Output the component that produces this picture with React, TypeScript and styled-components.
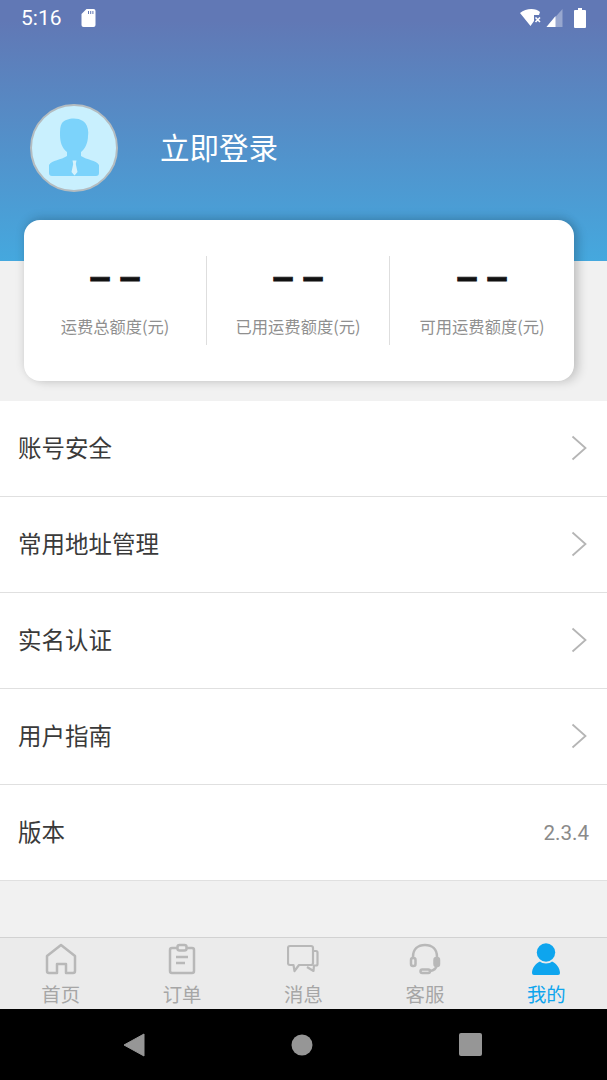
import styled, { createGlobalStyle } from "styled-components";

const GlobalStyle = createGlobalStyle`
  html, body {
    margin: 0;
    padding: 0;
    background: #f1f1f1;
  }
  body {
    font-family: "Noto Sans CJK SC", "Liberation Sans", sans-serif;
  }
`;

const Page = styled.div`
  width: 607px;
  height: 1080px;
  display: flex;
  flex-direction: column;
  overflow: hidden;
  background: #f1f1f1;
`;

const Header = styled.header`
  height: 261px;
  flex: none;
  display: flex;
  flex-direction: column;
  background: linear-gradient(180deg, #6178b5 0%, #6178b5 8%, #45a8de 100%);
`;

const StatusBar = styled.div`
  height: 36px;
  display: flex;
  align-items: center;
  padding: 0 21px;
  color: #fff;
  font-family: Roboto, "Liberation Sans", sans-serif;
  font-size: 21px;
`;

const Time = styled.span`
  margin-right: 19px;
`;

const StatusRight = styled.div`
  margin-left: auto;
  display: flex;
  align-items: center;
  gap: 4px;
`;

const Profile = styled.div`
  display: flex;
  align-items: center;
  padding: 68px 0 0 30px;
  gap: 42px;
`;

const Avatar = styled.div`
  width: 88px;
  height: 88px;
  flex: none;
  box-sizing: border-box;
  border-radius: 50%;
  border: 2px solid #b4bcc0;
  background: #c9f0fe;
  display: flex;
  align-items: center;
  justify-content: center;
  overflow: hidden;
`;

const LoginText = styled.div`
  color: #fff;
  font-size: 29.5px;
  line-height: 40px;
  margin-bottom: 5px;
`;

const Card = styled.section`
  flex: none;
  height: 161px;
  margin: -41px 33px 0 24px;
  border-radius: 16px;
  background: #fff;
  box-shadow: 6px 2px 10px rgba(0, 0, 0, 0.12), 0 -3px 10px rgba(0, 0, 0, 0.14);
  display: grid;
  grid-template-columns: 183px 183px 1fr;
  align-items: center;
`;

const Stat = styled.div<{ $divider?: boolean }>`
  height: 89px;
  display: flex;
  flex-direction: column;
  align-items: center;
  border-right: ${(p) => (p.$divider ? "1px solid #dedede" : "none")};
`;

const StatDash = styled.div`
  font-family: "Liberation Sans", sans-serif;
  font-weight: 700;
  font-size: 38px;
  line-height: 44px;
  word-spacing: -1.6px;
  color: #111;
  -webkit-text-stroke: 0.8px #111;
  margin-top: -1px;
`;

const StatLabel = styled.div`
  font-size: 16.3px;
  line-height: 22px;
  color: #8f8f8f;
  margin-top: 16px;
`;

const Menu = styled.nav`
  margin-top: 20px;
  background: #fff;
  flex: none;
`;

const Row = styled.div`
  height: 95px;
  border-bottom: 1px solid #e0e0e0;
  display: flex;
  align-items: center;
  justify-content: space-between;
  padding: 0 19px 0 18px;
`;

const RowLabel = styled.span`
  font-size: 23.5px;
  color: #3a3a3a;
  margin-bottom: 4px;
`;

const RowValue = styled.span`
  font-family: Roboto, "Liberation Sans", sans-serif;
  font-size: 20.6px;
  color: #8a8a8a;
  margin-right: -1px;
`;

const Chevron = styled.svg`
  margin: 0 1px 2px 0;
`;

const Spacer = styled.div`
  flex: 1;
`;

const TabBar = styled.footer`
  height: 72px;
  flex: none;
  box-sizing: border-box;
  background: #ebebeb;
  border-top: 1px solid #d2d2d2;
  display: grid;
  grid-template-columns: repeat(5, 1fr);
`;

const Tab = styled.div<{ $active?: boolean }>`
  display: flex;
  flex-direction: column;
  align-items: center;
  padding-top: 5px;
  color: ${(p) => (p.$active ? "#0ea5ee" : "#a6a6a6")};
`;

const TabLabel = styled.span`
  font-size: 19.4px;
  line-height: 24px;
  margin-top: 7px;
`;

const NavBar = styled.div`
  height: 71px;
  flex: none;
  background: #000;
  display: flex;
  align-items: center;
  justify-content: center;
  gap: 146px;
  padding-right: 2px;
`;

const BatteryIcon = styled.svg`
  margin-left: 7px;
`;

const MENU = ["账号安全", "常用地址管理", "实名认证", "用户指南"];

const TabIconHome = () => (
  <svg width="32" height="32" viewBox="0 0 32 32" fill="none" stroke="#b8b8b8" strokeWidth="2.5" strokeLinejoin="round">
    <path d="M2 13 L16 2 L30 13 V28 a2 2 0 0 1 -2 2 H21 V21 H12 V30 H4 a2 2 0 0 1 -2 -2 Z" />
  </svg>
);

const TabIconOrder = () => (
  <svg width="32" height="32" viewBox="0 0 32 32" fill="none" stroke="#b8b8b8" strokeWidth="2.5" strokeLinejoin="round">
    <path d="M11 5 H6 a2 2 0 0 0 -2 2 V28 a2 2 0 0 0 2 2 H26 a2 2 0 0 0 2 -2 V7 a2 2 0 0 0 -2 -2 H21" />
    <rect x="11.5" y="2" width="9" height="5.5" rx="2" />
    <path d="M10 14 H22 M10 20 H19" />
  </svg>
);

const TabIconMessage = () => (
  <svg width="32" height="32" viewBox="0 0 32 32" fill="none" stroke="#b8b8b8" strokeWidth="2.2" strokeLinejoin="round">
    <path d="M3 3 H24 a2 2 0 0 1 2 2 V20 a2 2 0 0 1 -2 2 H12 L7.5 28 L6.5 22 H3 a2 2 0 0 1 -2 -2 V5 a2 2 0 0 1 2 -2 Z" />
    <path d="M27 8 H29 a1.5 1.5 0 0 1 1.5 1.5 V21 a1.5 1.5 0 0 1 -1.5 1.5 H27 L26.5 28 L20 24" />
  </svg>
);

const TabIconService = () => (
  <svg width="32" height="32" viewBox="0 0 32 32" fill="none" stroke="#b8b8b8" strokeWidth="2.5" strokeLinejoin="round" strokeLinecap="round">
    <path d="M4 14 C4 6 9 2 16 2 C23 2 28 6 28 14" />
    <rect x="2" y="15" width="4.5" height="8" rx="2" />
    <rect x="25.5" y="15" width="4.5" height="8" rx="2" fill="#b8b8b8" />
    <path d="M27.5 23 C27 26 24 27.5 21 28" />
    <rect x="11.5" y="26.5" width="9.5" height="3.5" rx="1.7" />
  </svg>
);

const TabIconMine = () => (
  <svg width="28" height="32" viewBox="0 0 28 32" fill="#0ea5ee">
    <circle cx="14" cy="9.5" r="9.2" />
    <path d="M8 18.5 C10 21 18 21 20 18.5 C24 20 28 25 28 30 a2 2 0 0 1 -2 2 H2 a2 2 0 0 1 -2 -2 C0 25 4 20 8 18.5 Z" />
  </svg>
);

const TABS = [
  { label: "首页", icon: <TabIconHome /> },
  { label: "订单", icon: <TabIconOrder /> },
  { label: "消息", icon: <TabIconMessage /> },
  { label: "客服", icon: <TabIconService /> },
  { label: "我的", icon: <TabIconMine />, active: true },
];

const STATS = ["运费总额度(元)", "已用运费额度(元)", "可用运费额度(元)"];

export default function App() {
  return (
    <>
      <GlobalStyle />
      <Page>
        <Header>
          <StatusBar>
            <Time>5:16</Time>
            <svg width="15" height="18" viewBox="0 0 14 18" fill="#fff">
              <path d="M5 0 H12 a2 2 0 0 1 2 2 V16 a2 2 0 0 1 -2 2 H2 a2 2 0 0 1 -2 -2 V5 Z" />
              <path d="M6.5 2 h1 v3 h-1 Z M8.7 2 h1 v3 h-1 Z M10.9 2 h1 v3 h-1 Z" fill="#6178b5" />
            </svg>
            <StatusRight>
              <svg width="22" height="18" viewBox="0 0 22 18" fill="#fff">
                <path d="M0 4 C6 -1 16 -1 20 3 L19 6 H14 V12 L10.5 17 Z" />
                <path d="M15.5 8.5 L20 13 M20 8.5 L15.5 13" stroke="#fff" strokeWidth="1.6" />
              </svg>
              <svg width="17" height="18" viewBox="0 0 16 18">
                <path d="M16 0 V18 H0 Z" fill="#fff" fillOpacity="0.35" />
                <path d="M9 7 V18 H0 Z" fill="#fff" />
              </svg>
              <BatteryIcon width="12" height="20" viewBox="0 0 12 20" fill="#fff">
                <path d="M4 0 H8 V2 H11 a1 1 0 0 1 1 1 V19 a1 1 0 0 1 -1 1 H1 a1 1 0 0 1 -1 -1 V3 a1 1 0 0 1 1 -1 H4 Z" />
              </BatteryIcon>
            </StatusRight>
          </StatusBar>
          <Profile>
            <Avatar>
              <svg width="60" height="60" viewBox="0 0 60 60">
                <path d="M18 5 C22 0 33 -1 39 3 C43 6 45 11 44 18 C44 25 41 31 37 34 V38 C43 42 52 42 55 47 V55 a3 3 0 0 1 -3 3 H8 a3 3 0 0 1 -3 -3 V47 C8 42 17 42 23 38 V34 C18 30 16 24 16 17 C16 12 16 8 18 5 Z" fill="#7cd3fb" />
                <path d="M28.5 42.5 H32.5 L31.8 46 L33.5 54 L30.5 57.5 L27.5 54 L29.2 46 Z" fill="#d6f2fc" />
              </svg>
            </Avatar>
            <LoginText>立即登录</LoginText>
          </Profile>
        </Header>
        <Card>
          {STATS.map((s, i) => (
            <Stat key={s} $divider={i < 2}>
              <StatDash>– –</StatDash>
              <StatLabel>{s}</StatLabel>
            </Stat>
          ))}
        </Card>
        <Menu>
          {MENU.map((m) => (
            <Row key={m}>
              <RowLabel>{m}</RowLabel>
              <Chevron width="16" height="26" viewBox="0 0 16 26" fill="none">
                <path d="M1.5 1.5 L14.5 13 L1.5 24.5" stroke="#b5b5b5" strokeWidth="1.8" />
              </Chevron>
            </Row>
          ))}
          <Row>
            <RowLabel>版本</RowLabel>
            <RowValue>2.3.4</RowValue>
          </Row>
        </Menu>
        <Spacer />
        <TabBar>
          {TABS.map((t) => (
            <Tab key={t.label} $active={t.active}>
              {t.icon}
              <TabLabel>{t.label}</TabLabel>
            </Tab>
          ))}
        </TabBar>
        <NavBar>
          <svg width="22" height="24" viewBox="0 0 22 24" fill="#969696">
            <path d="M21 1 V23 L1 12 Z" stroke="#969696" strokeWidth="1" strokeLinejoin="round" />
          </svg>
          <svg width="22" height="22" viewBox="0 0 22 22" fill="#969696">
            <circle cx="11" cy="11" r="10.5" />
          </svg>
          <svg width="23" height="23" viewBox="0 0 23 23" fill="#969696">
            <rect width="23" height="23" rx="2" />
          </svg>
        </NavBar>
      </Page>
    </>
  );
}
